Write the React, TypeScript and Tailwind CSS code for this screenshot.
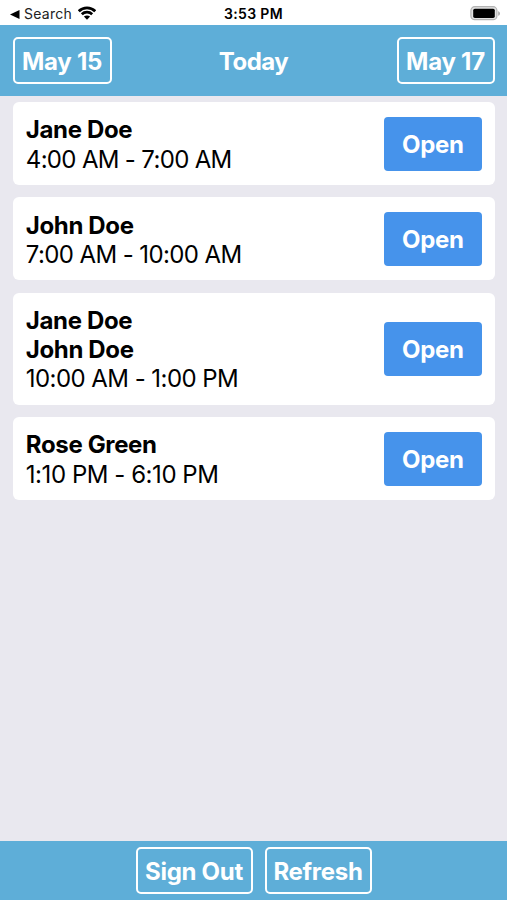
import clsx from 'clsx';

interface Shift {
  id: number;
  names: string[];
  time: string;
  timeClass: string;
}

const shifts: Shift[] = [
  { id: 1, names: ['Jane Doe'], time: '4:00 AM - 7:00 AM', timeClass: 'tracking-[-0.67px]' },
  { id: 2, names: ['John Doe'], time: '7:00 AM - 10:00 AM', timeClass: 'tracking-[-0.6px]' },
  { id: 3, names: ['Jane Doe', 'John Doe'], time: '10:00 AM - 1:00 PM', timeClass: 'tracking-[-0.55px]' },
  { id: 4, names: ['Rose Green'], time: '1:10 PM - 6:10 PM', timeClass: 'tracking-[-0.45px]' },
];

function StatusBar() {
  return (
    <div className="grid h-[25px] shrink-0 grid-cols-3 items-center bg-white pt-[3px] text-[14px] leading-none text-black">
      <div className="flex items-center pl-[10px]">
        <svg className="mr-[4px] h-[9px] w-[10px]" viewBox="0 0 10 9">
          <path d="M0 4.5L9.5 0v9z" />
        </svg>
        <span className="tracking-[0.25px] text-[#222]">Search</span>
        <svg className="mb-[2px] ml-[6px] h-[14px] w-[18px]" viewBox="0 0 18 14" fill="none" stroke="black" strokeWidth="2.7">
          <path d="M0.8 5.2C5.3 0.7 12.7 0.7 17.2 5.2" />
          <path d="M3.8 8.3c2.9-2.8 7.5-2.8 10.4 0" />
          <path d="M9 13.7L5.9 10.6c1.7-1.6 4.5-1.6 6.2 0z" fill="black" stroke="none" />
        </svg>
      </div>
      <div className="text-center font-semibold tracking-[0.35px]">3:53 PM</div>
      <div className="flex justify-end pr-[6px] pb-px">
        <svg className="h-[15px] w-[31px]" viewBox="0 0 31 15">
          <rect x="0.9" y="0.7" width="26" height="13" rx="3.8" fill="#e2e2e2" stroke="#b3b3b3" strokeWidth="1.2" />
          <rect x="3.2" y="2.7" width="21.6" height="9.2" rx="1.6" fill="black" />
          <path d="M28.3 5.2c2 .7 2 3.9 0 4.6z" fill="#999" />
        </svg>
      </div>
    </div>
  );
}

function OutlineButton({ label, className }: { label: string; className: string }) {
  return (
    <button
      className={clsx(
        'flex h-[47px] items-center justify-center whitespace-nowrap rounded-[5px] border-2 border-white pt-[2px] font-[650] text-white',
        className
      )}
    >
      {label}
    </button>
  );
}

function ShiftCard({ shift }: { shift: Shift }) {
  return (
    <div className="flex items-center justify-between rounded-[6px] bg-white px-[12.5px] py-[12.3px]">
      <div className="relative top-px pl-[0.8px] leading-[29.25px] text-black">
        {shift.names.map((name) => (
          <div key={name} className="font-[650] tracking-[-0.35px]">
            {name}
          </div>
        ))}
        <div className={shift.timeClass}>{shift.time}</div>
      </div>
      <button className="h-[54px] w-[98.5px] rounded-[4px] bg-[#4693eb] pt-[2px] font-[650] tracking-[-0.35px] text-white">
        Open
      </button>
    </div>
  );
}

export default function App() {
  return (
    <div className="flex h-screen flex-col bg-[#e9e8ef] font-['Inter','Liberation_Sans',sans-serif] text-[24px]">
      <StatusBar />
      <header className="grid h-[71.4px] shrink-0 grid-cols-[1fr_auto_1fr] items-center bg-[#5eaed8] px-[12.5px]">
        <OutlineButton label="May 15" className="w-[99px] tracking-[-0.25px]" />
        <h1 className="pt-[2px] font-[650] tracking-[-0.5px] text-white">Today</h1>
        <OutlineButton label="May 17" className="w-[98px] justify-self-end tracking-[-0.25px]" />
      </header>
      <main className="flex flex-1 flex-col gap-[12.2px] px-[12.5px] pt-[5.6px]">
        {shifts.map((shift) => (
          <ShiftCard key={shift.id} shift={shift} />
        ))}
      </main>
      <footer className="flex h-[59px] shrink-0 items-center justify-center gap-[12px] bg-[#5eaed8]">
        <OutlineButton label="Sign Out" className="w-[117px] tracking-[-0.3px]" />
        <OutlineButton label="Refresh" className="w-[107px] tracking-[-0.3px]" />
      </footer>
    </div>
  );
}
